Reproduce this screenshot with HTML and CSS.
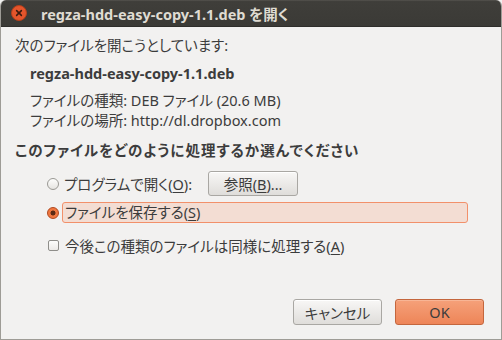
FILE: index.html
```html
<!DOCTYPE html>
<html lang="ja">
<head>
    <meta charset="UTF-8">
    <title>regza-hdd-easy-copy-1.1.deb を開く</title>
    <link rel="stylesheet" href="styles.css">
</head>
<body>
    <div class="window">
        <div class="titlebar">
            <span class="close-btn">
                <svg width="16" height="16" viewBox="0 0 16 16">
                    <circle cx="8" cy="8" r="7.5" fill="#e5552c" stroke="#b8401c" stroke-width="1"/>
                    <path d="M5.6 5.6 L10.4 10.4 M10.4 5.6 L5.6 10.4" stroke="#3c1a0e" stroke-width="1.5" stroke-linecap="round"/>
                </svg>
            </span>
            <span class="title">regza-hdd-easy-copy-1.1.deb を開く</span>
        </div>

        <div class="content">
            <p class="intro">次のファイルを開こうとしています:</p>
            <p class="filename">regza-hdd-easy-copy-1.1.deb</p>
            <p class="info first">ファイルの種類: DEB ファイル (20.6 MB)</p>
            <p class="info">ファイルの場所: http://dl.dropbox.com</p>

            <p class="question">このファイルをどのように処理するか選んでください</p>

            <div class="option">
                <span class="radio"></span>
                <span class="label">プログラムで開く(<u>O</u>):</span>
                <button class="btn browse">参照(<u>B</u>)...</button>
            </div>

            <div class="option selected">
                <span class="radio checked"></span>
                <span class="label focus">ファイルを保存する(<u>S</u>)</span>
            </div>

            <div class="option check-row">
                <span class="checkbox"></span>
                <span class="label">今後この種類のファイルは同様に処理する(<u>A</u>)</span>
            </div>
        </div>

        <div class="actions">
            <button class="btn">キャンセル</button>
            <button class="btn ok">OK</button>
        </div>
    </div>
</body>
</html>
```

FILE: styles.css
```css
html, body {
    margin: 0;
    padding: 0;
    background: #f2f1f0;
}

body {
    font-family: "Noto Sans", "Noto Sans CJK JP", sans-serif;
    font-size: 14.5px;
    font-feature-settings: "palt" 1;
    color: #3c3c3c;
}

.window {
    width: 502px;
    height: 340px;
    box-sizing: border-box;
    display: flex;
    flex-direction: column;
    background: #f2f1f0;
    border: 1px solid #9e9c96;
    border-top: none;
    border-radius: 6px 6px 0 0;
    overflow: hidden;
}

.titlebar {
    height: 27px;
    flex: none;
    display: flex;
    align-items: center;
    padding-left: 10px;
    background: linear-gradient(#56544f, #3f3e3a 6%, #3b3a36);
    border-bottom: 1px solid #2f2e2b;
    box-sizing: border-box;
}

.close-btn {
    display: flex;
    width: 16px;
    height: 16px;
}

.title {
    margin-left: 14px;
    font-weight: bold;
    color: #dfdbd2;
    white-space: nowrap;
}

.content {
    padding: 0 14px;
}

.content p {
    margin: 0;
    line-height: 20px;
    white-space: nowrap;
}

.intro {
    margin-top: 8px !important;
}

.filename {
    margin-top: 8px !important;
    padding-left: 15px;
    font-weight: bold;
}

.info {
    padding-left: 15px;
}

.info.first {
    margin-top: 7px !important;
}

.question {
    margin-top: 10px !important;
    font-weight: bold;
    letter-spacing: 1px;
}

.option {
    display: flex;
    align-items: center;
    padding-left: 32px;
    white-space: nowrap;
}

.option .label {
    margin-left: 5px;
}

.option:first-of-type {
    margin-top: 11px;
    height: 25px;
}

.option.selected {
    margin-top: 6px;
    height: 21px;
}

.check-row {
    margin-top: 12px;
    height: 20px;
}

.radio {
    width: 12px;
    height: 12px;
    box-sizing: border-box;
    border: 1px solid #9a9994;
    border-radius: 50%;
    background: linear-gradient(#fdfdfc, #e6e4e1);
    flex: none;
}

.radio.checked {
    border-color: #b0471d;
    background: radial-gradient(circle, #5c2a14 0 2.2px, #f0773f 2.8px);
}

.label.focus {
    margin-left: 3px;
    flex: 1;
    height: 21px;
    line-height: 19px;
    box-sizing: border-box;
    padding-left: 2px;
    margin-right: 19px;
    background: #f3ddd3;
    border: 1px solid #f2906a;
    border-radius: 3px;
}

.checkbox {
    width: 11px;
    height: 11px;
    box-sizing: border-box;
    margin-left: 1px;
    border: 1px solid #8f8e8a;
    border-radius: 2px;
    background: linear-gradient(#fdfdfc, #eceae7);
    flex: none;
}

.check-row .label {
    margin-left: 6px;
}

.btn {
    font-family: inherit;
    font-size: 14.5px;
    font-feature-settings: "palt" 1;
    color: #3c3c3c;
    width: 89px;
    height: 26px;
    padding: 0;
    box-sizing: border-box;
    border: 1px solid #a9a7a3;
    border-radius: 3px;
    background: linear-gradient(#f8f7f6, #dfddda);
    box-shadow: inset 0 1px 0 #ffffff;
}

.browse {
    width: 90px;
    height: 25px;
    margin-left: 16px;
}

.actions {
    margin-top: auto;
    display: flex;
    justify-content: flex-end;
    gap: 13px;
    padding: 0 17px 14px 0;
}

.btn.ok {
    border-color: #c4663d;
    background: linear-gradient(#f5a17a, #ee8558);
    box-shadow: inset 0 1px 0 #f8b595;
}

u {
    text-underline-offset: 2px;
}
```
